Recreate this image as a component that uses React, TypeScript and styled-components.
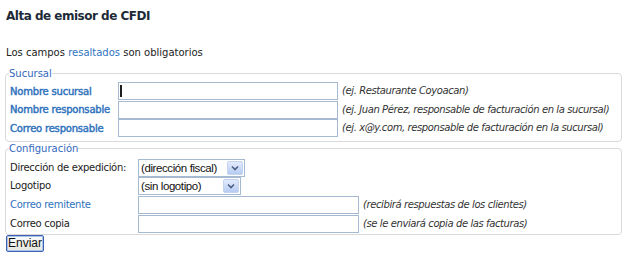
import React from 'react';
import styled, { createGlobalStyle } from 'styled-components';

const GlobalStyle = createGlobalStyle`
  html, body {
    margin: 0;
    padding: 0;
    background: #ffffff;
  }
  body {
    font-family: "DejaVu Sans", Verdana, sans-serif;
    font-size: 10px;
    color: #222222;
  }
`;

const Page = styled.div`
  padding: 8px 2px 0 5px;
`;

const Title = styled.h1`
  margin: 0 0 0 1px;
  font-size: 12px;
  font-weight: bold;
  letter-spacing: -0.5px;
  color: #1d2a38;
  line-height: 16px;
`;

const Intro = styled.p`
  margin: 22px 0 0 1px;
  line-height: 14px;
`;

const Highlight = styled.span`
  color: #2f74c0;
`;

const Group = styled.fieldset<{ $first?: boolean; $bottom: number }>`
  margin: ${(p) => (p.$first ? '7px' : '0')} 0 0 0;
  padding: 2px 4px ${(p) => p.$bottom}px 4px;
  border: 1px solid #d9d9d9;
  border-radius: 4px;
  min-width: 0;
`;

const Legend = styled.legend`
  padding: 0;
  margin-left: -1px;
  color: #3368bd;
  line-height: 13px;
`;

const Grid = styled.table<{ $top?: number }>`
  border-collapse: collapse;
  border-spacing: 0;
  margin-top: ${(p) => p.$top ?? 0}px;
`;

const Row = styled.tr<{ $height: number }>`
  height: ${(p) => p.$height}px;
`;

const LabelCell = styled.td<{ $width: number }>`
  width: ${(p) => p.$width}px;
  min-width: ${(p) => p.$width}px;
  padding: 0;
  white-space: nowrap;
`;

const Label = styled.span<{ $tone?: 'req' | 'reqBold' | 'plain' }>`
  color: ${(p) => (p.$tone === 'plain' ? '#222222' : '#2f72bd')};
  letter-spacing: ${(p) => (p.$tone === 'reqBold' ? '-0.2px' : '-0.3px')};
  -webkit-text-stroke: ${(p) => (p.$tone === 'reqBold' ? '0.45px currentColor' : '0')};
`;

const FieldCell = styled.td`
  padding: 0;
  white-space: nowrap;
  line-height: 12px;
`;

const TextBox = styled.input<{ $width: number }>`
  box-sizing: border-box;
  width: ${(p) => p.$width}px;
  height: 18px;
  margin: 0;
  padding: 0 2px;
  border: 1px solid #a5b9d1;
  background: #ffffff;
  font-family: "Liberation Sans", Arial, sans-serif;
  font-size: 12px;
  vertical-align: middle;
  outline: none;
`;

const FocusBox = styled(TextBox)`
  background: linear-gradient(#1e1e1e, #1e1e1e) no-repeat 1px 2px / 2px 12px, #ffffff;
`;

const Hint = styled.span`
  margin-left: 4px;
  font-style: italic;
  letter-spacing: -0.4px;
  color: #333333;
  vertical-align: middle;
`;

const SelectFrame = styled.span<{ $width: number }>`
  box-sizing: border-box;
  display: inline-flex;
  align-items: stretch;
  width: ${(p) => p.$width}px;
  height: 18px;
  border: 1px solid #a5b9d1;
  background: #ffffff;
  vertical-align: middle;
`;

const Select = styled.select`
  flex: 1;
  min-width: 0;
  appearance: none;
  -webkit-appearance: none;
  border: none;
  margin: 0;
  padding: 0 0 0 2px;
  background: transparent;
  font-family: "Liberation Sans", Arial, sans-serif;
  font-size: 11.5px;
  letter-spacing: -0.4px;
  color: #111111;
  outline: none;
`;

const ArrowButton = styled.span`
  width: 14px;
  margin: 1px;
  display: flex;
  align-items: center;
  justify-content: center;
  background: linear-gradient(#e2ebfc, #b7cbf2);
  border: 1px solid #c3d3f0;
  border-radius: 2px;
`;

const Submit = styled.button`
  margin: 0 0 0 1px;
  padding: 0 1px;
  height: 17px;
  font-family: "Liberation Sans", Arial, sans-serif;
  font-size: 12px;
  color: #111111;
  background: linear-gradient(#fbfbfb, #e6e6e0);
  border: 1px solid #3c62b0;
  border-radius: 2px;
  box-shadow: inset 0 0 0 1px #a9c2ee;
  line-height: 13px;
`;

const Chevron = () => (
  <svg width="8" height="6" viewBox="0 0 8 6">
    <path d="M1 1.5 L4 4.5 L7 1.5" fill="none" stroke="#4d6185" strokeWidth="1.6" />
  </svg>
);

const Dropdown = ({ width, value }: { width: number; value: string }) => (
  <SelectFrame $width={width}>
    <Select defaultValue={value}>
      <option value={value}>{value}</option>
    </Select>
    <ArrowButton>
      <Chevron />
    </ArrowButton>
  </SelectFrame>
);

const sucursalRows = [
  { label: 'Nombre sucursal', hint: '(ej. Restaurante Coyoacan)' },
  { label: 'Nombre responsable', hint: '(ej. Juan Pérez, responsable de facturación en la sucursal)' },
  { label: 'Correo responsable', hint: '(ej. x@y.com, responsable de facturación en la sucursal)' },
];

const App = () => {
  return (
    <Page>
      <GlobalStyle />
      <Title>Alta de emisor de CFDI</Title>
      <Intro>
        Los campos <Highlight>resaltados</Highlight> son obligatorios
      </Intro>

      <Group $first $bottom={3}>
        <Legend>Sucursal</Legend>
        <Grid>
          <tbody>
            {sucursalRows.map((row, i) => (
              <Row key={row.label} $height={18.5}>
                <LabelCell $width={108}>
                  <Label $tone="reqBold">{row.label}</Label>
                </LabelCell>
                <FieldCell>
                  {i === 0 ? <FocusBox $width={220} /> : <TextBox $width={220} />}
                  <Hint>{row.hint}</Hint>
                </FieldCell>
              </Row>
            ))}
          </tbody>
        </Grid>
      </Group>

      <Group $bottom={1}>
        <Legend>Configuración</Legend>
        <Grid $top={2}>
          <tbody>
            <Row $height={18}>
              <LabelCell $width={128}>
                <Label $tone="plain">Dirección de expedición:</Label>
              </LabelCell>
              <FieldCell>
                <Dropdown width={107} value="(dirección fiscal)" />
              </FieldCell>
            </Row>
            <Row $height={18.5}>
              <LabelCell $width={128}>
                <Label $tone="plain">Logotipo</Label>
              </LabelCell>
              <FieldCell>
                <Dropdown width={103} value="(sin logotipo)" />
              </FieldCell>
            </Row>
            <Row $height={19}>
              <LabelCell $width={128}>
                <Label $tone="req">Correo remitente</Label>
              </LabelCell>
              <FieldCell>
                <TextBox $width={221} />
                <Hint>(recibirá respuestas de los clientes)</Hint>
              </FieldCell>
            </Row>
            <Row $height={19}>
              <LabelCell $width={128}>
                <Label $tone="plain">Correo copia</Label>
              </LabelCell>
              <FieldCell>
                <TextBox $width={221} />
                <Hint>(se le enviará copia de las facturas)</Hint>
              </FieldCell>
            </Row>
          </tbody>
        </Grid>
      </Group>

      <Submit type="button">Enviar</Submit>
    </Page>
  );
};

export default App;
